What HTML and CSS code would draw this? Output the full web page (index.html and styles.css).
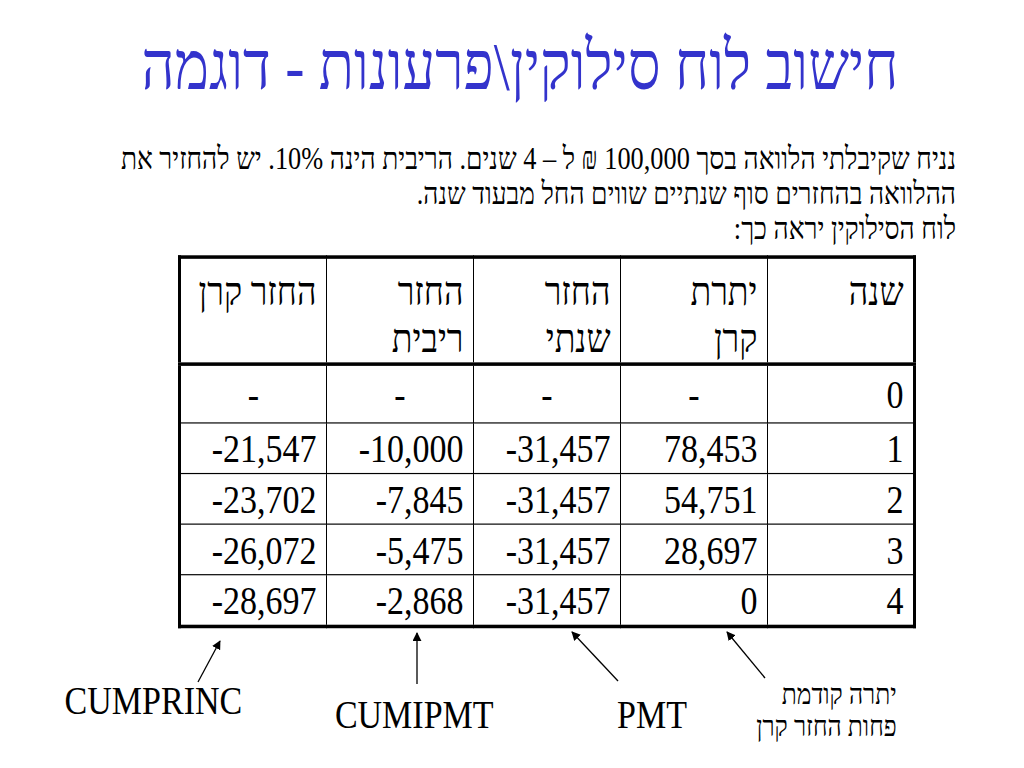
FILE: index.html
```html
<!DOCTYPE html>
<html lang="he">
<head>
<meta charset="utf-8">
<title>חישוב לוח סילוקין</title>
<link rel="stylesheet" href="styles.css">
</head>
<body>
<div class="slide">
  <h1 class="title" dir="rtl">חישוב לוח סילוקין\פרעונות - דוגמה</h1>
  <p class="intro" dir="rtl">נניח שקיבלתי הלוואה בסך 100,000 ₪ ל – 4 שנים. הריבית הינה 10%. יש להחזיר את<br>ההלוואה בהחזרים סוף שנתיים שווים החל מבעוד שנה.<br>לוח הסילוקין יראה כך:</p>
  <table class="loan" dir="rtl">
    <thead>
      <tr>
        <th>שנה</th>
        <th>יתרת<br>קרן</th>
        <th>החזר<br>שנתי</th>
        <th>החזר<br>ריבית</th>
        <th>החזר קרן</th>
      </tr>
    </thead>
    <tbody>
      <tr class="first">
        <td class="num">0</td><td class="dash">-</td><td class="dash">-</td><td class="dash">-</td><td class="dash">-</td>
      </tr>
      <tr><td class="num">1</td><td class="num">78,453</td><td class="num">-31,457</td><td class="num">-10,000</td><td class="num">-21,547</td></tr>
      <tr><td class="num">2</td><td class="num">54,751</td><td class="num">-31,457</td><td class="num">-7,845</td><td class="num">-23,702</td></tr>
      <tr><td class="num">3</td><td class="num">28,697</td><td class="num">-31,457</td><td class="num">-5,475</td><td class="num">-26,072</td></tr>
      <tr><td class="num">4</td><td class="num">0</td><td class="num">-31,457</td><td class="num">-2,868</td><td class="num">-28,697</td></tr>
    </tbody>
  </table>
  <div class="notes">
    <div class="note n1">CUMPRINC</div>
    <div class="note n2">CUMIPMT</div>
    <div class="note n3">PMT</div>
    <div class="note n4" dir="rtl">יתרה קודמת<br>פחות החזר קרן</div>
  </div>
</div>
<svg class="arrows" width="1024" height="768" viewBox="0 0 1024 768" aria-hidden="true">
  <defs>
    <marker id="head" viewBox="0 0 10 10" refX="9" refY="5" markerWidth="9" markerHeight="9" markerUnits="userSpaceOnUse" orient="auto">
      <path d="M0,0 L10,5 L0,10 z" fill="#000"/>
    </marker>
  </defs>
  <line x1="198" y1="682" x2="220" y2="641" stroke="#000" stroke-width="1.3" marker-end="url(#head)"/>
  <line x1="417" y1="684" x2="417" y2="633" stroke="#000" stroke-width="1.3" marker-end="url(#head)"/>
  <line x1="618" y1="681" x2="572" y2="632" stroke="#000" stroke-width="1.3" marker-end="url(#head)"/>
  <line x1="765" y1="678" x2="727" y2="632" stroke="#000" stroke-width="1.3" marker-end="url(#head)"/>
</svg>
</body>
</html>
```
FILE: styles.css
```css
html, body {
  margin: 0;
  padding: 0;
  overflow: hidden;
  background: #fff;
}
body {
  width: 1024px;
  height: 768px;
  position: relative;
  font-family: "Liberation Serif", "Times New Roman", serif;
  color: #000;
}
/* slide text is drawn tall and narrow: lay out at 85% height, stretch vertically */
.slide {
  width: 1024px;
  height: 652.8px;
  transform: scaleY(1.17647);
  transform-origin: 0 0;
  display: flex;
  flex-direction: column;
}
.title {
  margin: 20.4px 0 0 0;
  padding-left: 16px;
  font-size: 57.8px;
  line-height: 73.1px;
  font-weight: normal;
  color: #3333cc;
  text-align: center;
  white-space: nowrap;
}
.intro {
  margin: 27.2px 0 0 0;
  padding-right: 68px;
  font-size: 26.35px;
  line-height: 29.75px;
  text-align: right;
  white-space: nowrap;
}
.loan {
  margin: 6.8px 0 0 178px;
  width: 738px;
  table-layout: fixed;
  border-collapse: collapse;
  border: 3px solid #000;
  font-size: 34px;
}
.loan th,
.loan td {
  border: 1px solid #000;
  padding: 0 9.5px 0 9.5px;
  text-align: right;
  font-weight: normal;
}
.loan th {
  height: 75.5px;
  vertical-align: top;
  line-height: 40px;
  padding-top: 8.5px;
  border-bottom: 3px solid #000;
}
.loan td {
  line-height: 37px;
  height: 42px;
  vertical-align: middle;
}
.loan td.num {
  direction: ltr;
  text-align: right;
}
.loan tr.first td {
  height: 48px;
}
.loan td.dash {
  text-align: center;
}
.notes {
  margin-top: 37.3px;
  padding-left: 64.6px;
  display: flex;
  align-items: flex-start;
}
.note {
  font-size: 34px;
  line-height: 34px;
  white-space: nowrap;
}
.n1 {
  width: 270.3px;
  padding-top: 7.6px;
}
.n2 {
  width: 282.2px;
  padding-top: 19.5px;
}
.n3 {
  width: 136px;
  padding-top: 19.5px;
}
.n4 {
  width: 143.6px;
  padding-top: 4.5px;
  font-size: 24.65px;
  line-height: 28px;
  text-align: right;
}
.arrows {
  position: absolute;
  left: 0;
  top: 0;
  pointer-events: none;
}
```
